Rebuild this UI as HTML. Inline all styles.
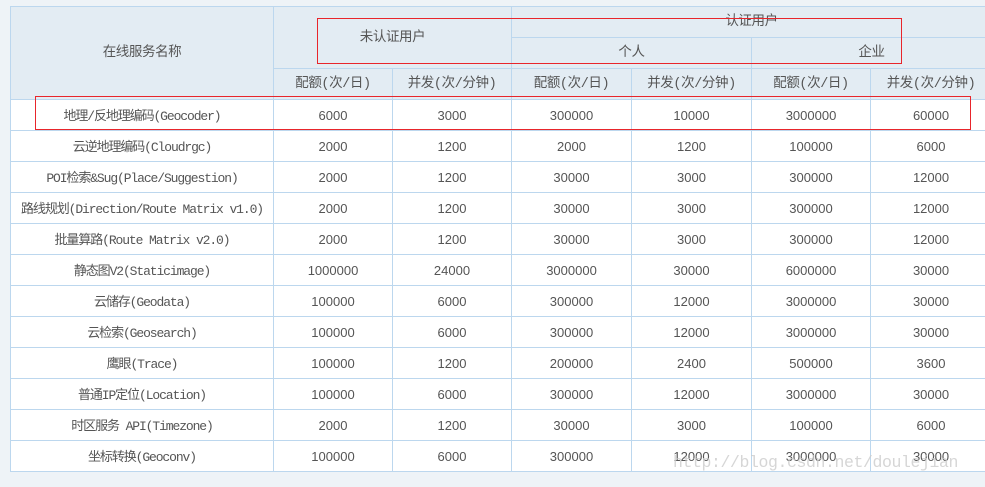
<!DOCTYPE html>
<html><head><meta charset="utf-8"><style>
html,body{margin:0;padding:0;background:#eef3f7;width:985px;height:487px;overflow:hidden;position:relative}
table{position:absolute;left:10px;top:6px;border-collapse:collapse;table-layout:fixed;width:981px;font-family:"Liberation Sans","Noto Sans CJK SC",sans-serif;font-size:13px;color:#555}
td,th{border:1px solid #bcd7ee;text-align:center;height:29px;line-height:29px;padding:1px 0 0 0;font-weight:normal;white-space:nowrap;overflow:hidden;background:#fff}
td:first-child{font-family:"Liberation Mono","Noto Sans CJK SC",monospace;font-size:13px;letter-spacing:-1.1px;line-height:27px;padding-top:3px;height:27px}
th{background:#e3ecf3;font-family:"Liberation Mono","Noto Sans CJK SC",monospace;font-size:13.5px;letter-spacing:-0.4px;line-height:28px;padding-top:2px;height:28px}
.box{position:absolute;border:1px solid #e8252b}
.wm{position:absolute;left:673px;top:453px;font-family:"Liberation Mono",monospace;font-size:16.5px;color:#ccc;opacity:.8;letter-spacing:-.4px}
</style></head><body>
<table>
<colgroup><col style="width:263px"><col style="width:119px"><col style="width:119px"><col style="width:120px"><col style="width:120px"><col style="width:119px"><col style="width:121px"></colgroup>
<tr><th rowspan="3" style="line-height:20px">在线服务名称</th><th colspan="2" rowspan="2" style="line-height:20px">未认证用户</th><th colspan="4">认证用户</th></tr>
<tr><th colspan="2">个人</th><th colspan="2">企业</th></tr>
<tr><th>配额(次/日)</th><th>并发(次/分钟)</th><th>配额(次/日)</th><th>并发(次/分钟)</th><th>配额(次/日)</th><th>并发(次/分钟)</th></tr>
<tr><td>地理/反地理编码(Geocoder)</td><td>6000</td><td>3000</td><td>300000</td><td>10000</td><td>3000000</td><td>60000</td></tr>
<tr><td>云逆地理编码(Cloudrgc)</td><td>2000</td><td>1200</td><td>2000</td><td>1200</td><td>100000</td><td>6000</td></tr>
<tr><td>POI检索&amp;Sug(Place/Suggestion)</td><td>2000</td><td>1200</td><td>30000</td><td>3000</td><td>300000</td><td>12000</td></tr>
<tr><td>路线规划(Direction/Route Matrix v1.0)</td><td>2000</td><td>1200</td><td>30000</td><td>3000</td><td>300000</td><td>12000</td></tr>
<tr><td>批量算路(Route Matrix v2.0)</td><td>2000</td><td>1200</td><td>30000</td><td>3000</td><td>300000</td><td>12000</td></tr>
<tr><td>静态图V2(Staticimage)</td><td>1000000</td><td>24000</td><td>3000000</td><td>30000</td><td>6000000</td><td>30000</td></tr>
<tr><td>云储存(Geodata)</td><td>100000</td><td>6000</td><td>300000</td><td>12000</td><td>3000000</td><td>30000</td></tr>
<tr><td>云检索(Geosearch)</td><td>100000</td><td>6000</td><td>300000</td><td>12000</td><td>3000000</td><td>30000</td></tr>
<tr><td>鹰眼(Trace)</td><td>100000</td><td>1200</td><td>200000</td><td>2400</td><td>500000</td><td>3600</td></tr>
<tr><td>普通IP定位(Location)</td><td>100000</td><td>6000</td><td>300000</td><td>12000</td><td>3000000</td><td>30000</td></tr>
<tr><td>时区服务 API(Timezone)</td><td>2000</td><td>1200</td><td>30000</td><td>3000</td><td>100000</td><td>6000</td></tr>
<tr><td>坐标转换(Geoconv)</td><td>100000</td><td>6000</td><td>300000</td><td>12000</td><td>3000000</td><td>30000</td></tr>
</table>
<div class="box" style="left:317px;top:18px;width:583px;height:44px"></div>
<div class="box" style="left:35px;top:96px;width:934px;height:32px"></div>
<div class="wm">http://blog.csdn.net/doulejian</div>
</body></html>
